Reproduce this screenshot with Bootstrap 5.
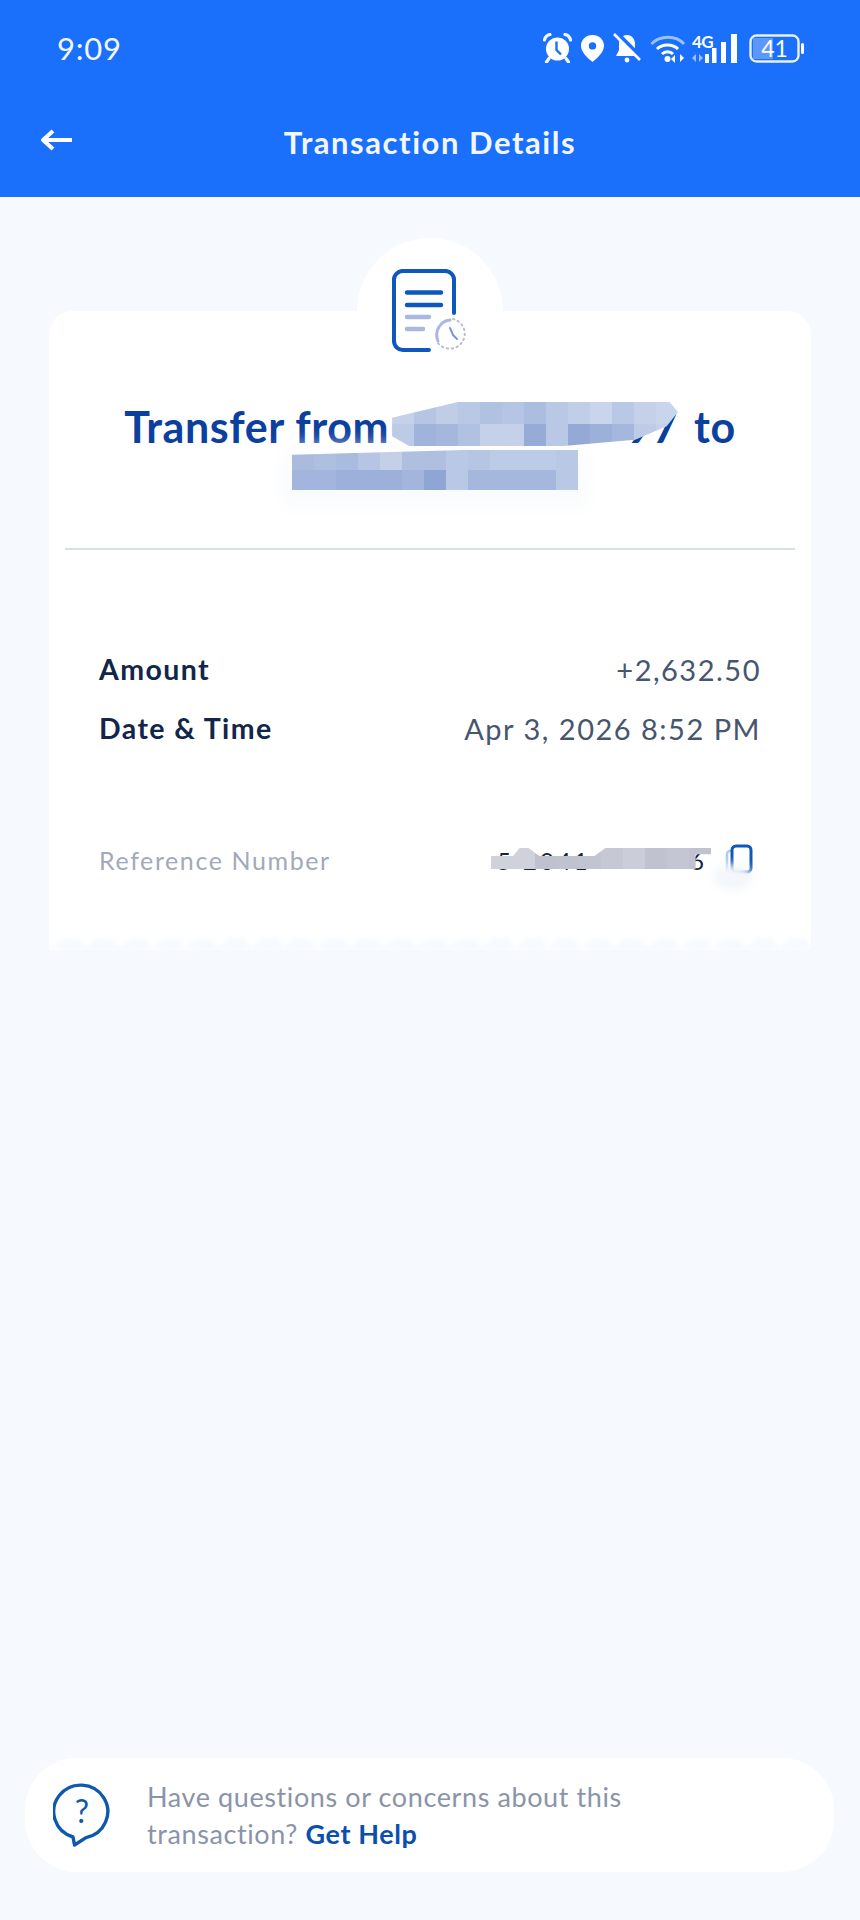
<!DOCTYPE html>
<html lang="en">
<head>
  <meta charset="UTF-8" />
  <meta name="viewport" content="width=device-width, initial-scale=1.0" />
  <title>Transaction Details</title>
  <link href="https://cdn.jsdelivr.net/npm/bootstrap@5.3.0/dist/css/bootstrap.min.css" rel="stylesheet">
  <style>
    body { font-family: Lato, "Open Sans", sans-serif; background: #f6faff; min-height: 1920px; }
    .top-head { background: #1a6ffb; height: 197px; color: #fff; }
    .status-row { height: 96px; padding: 0 56px 0 57px; }
    .clock-text { font-size: 31px; letter-spacing: .8px; color: #f2f7ff; }
    .status-icons { gap: 9px; }
    .net-label { font-size: 17px; font-weight: 700; line-height: 1; position: absolute; left: 0; top: -1px; letter-spacing: -.6px; }
    .net-wrap { width: 46px; height: 29px; margin-left: -4px; }
    .bat-wrap { width: 55px; height: 29px; margin-left: 2px; }
    .bat-text { font-size: 23px; line-height: 29px; width: 51px; text-align: center; }
    .nav-row { height: 94px; padding: 0 40px 2px; }
    .head-title { font-size: 31px; font-weight: 700; letter-spacing: 1.55px; color: #f2f7ff; }
    .receipt { margin: 114px 49px 0; height: 639px; border-radius: 24px 24px 0 0; padding: 93px 16px 0; }
    .receipt::after { content: ""; position: absolute; left: 0; right: 0; bottom: 0; height: 12px; filter: blur(2px);
      background: linear-gradient(135deg, transparent 50%, #f6faff 50%) 0 0 / 16.5px 12px repeat-x,
                  linear-gradient(225deg, transparent 50%, #f6faff 50%) 16.5px 0 / 33px 12px repeat-x; }
    .bump { width: 146px; height: 146px; left: 308px; top: -73px; z-index: 0; }
    .doc-icon { left: 342px; top: -42px; z-index: 1; }
    .title-text { font-size: 43px; font-weight: 700; line-height: 46px; color: #0c3f9e; height: 92px; margin: 0; letter-spacing: .6px; }
    .mosaic { display: inline-grid; vertical-align: top; }
    .redact-one { width: 286px; height: 46px; margin-left: 3px; text-align: right; }
    .mosaic-first { grid-auto-rows: 22px; left: 0; top: -2px; clip-path: polygon(0 36%, 23% 0, 97% 0, 100% 23%, 96% 55%, 85% 86%, 60% 100%, 6% 100%, 0 78%); }
    .mosaic-glow { margin-left: 10px; box-shadow: 0 8px 18px 10px #fafbfd; }
    .mosaic-second { grid-auto-rows: 20px; clip-path: polygon(0 12%, 60% 0, 100% 0, 100% 100%, 0 100%); }
    .rule-line { border-top: 2px solid #d7dfe7; margin: 52px 0 0; opacity: 1; }
    .rows-wrap { padding: 90px 34px 0; }
    .info-row { height: 59px; }
    .info-label { color: #12264a; font-weight: 700; font-size: 28.5px; letter-spacing: 1.4px; }
    .info-value { color: #46566f; font-size: 29px; letter-spacing: 1.5px; }
    .ref-row { margin-top: 88px; height: 30px; }
    .ref-label { color: #a2a9ba; font-size: 25px; letter-spacing: 1.6px; }
    .ref-values { margin-top: -5px; }
    .redact-ref { width: 222px; height: 21px; margin-right: 12px; font-size: 24px; line-height: 26px; color: #1c2433; letter-spacing: 3px; padding: 0 6px; }
    .mosaic-ref { grid-auto-rows: 21px; left: 0; top: 0; clip-path: polygon(0 38%, 10% 38%, 13% 0, 17% 0, 22% 38%, 47% 38%, 52% 0, 100% 0, 100% 30%, 93% 30%, 93% 100%, 0 100%); }
    .ref-smudge { width: 40px; height: 26px; left: 222px; top: 20px; background: #f3f6fa; border-radius: 50%; filter: blur(4px); }
    .help-box { margin: auto 26px 48px 25px; height: 114px; border-radius: 52px; padding-left: 28px; gap: 36px; }
    .help-text { font-size: 27px; line-height: 37px; color: #8a94a9; letter-spacing: .6px; }
    .help-link { color: #0b4fae; font-weight: 700; text-decoration: none; }
  </style>
</head>
<body class="d-flex flex-column">
  <header class="top-head">
    <div class="status-row d-flex justify-content-between align-items-center">
      <span class="clock-text">9:09</span>
      <div class="status-icons d-flex align-items-center">
        <!-- alarm -->
        <svg width="29" height="30" viewBox="0 0 29 30" fill="none">
          <circle cx="14.5" cy="16" r="11.5" fill="#fff"/>
          <path d="M1.5 7 A7 7 0 0 1 7 1.5 M27.5 7 A7 7 0 0 0 22 1.5 M6 25.5 L3.5 29 M23 25.5 L25.5 29" stroke="#f2f7ff" stroke-width="3.2" stroke-linecap="round"/>
          <path d="M13.5 8.5 V17 L18 21.5" stroke="#1a6ffb" stroke-width="2.4"/>
        </svg>
        <!-- pin -->
        <svg width="23" height="27" viewBox="0 0 23 27">
          <path fill="#fff" fill-rule="evenodd" d="M11.5 0 C5 0 0 4.6 0 10.8 C0 17 6 22.5 11.5 27 C17 22.5 23 17 23 10.8 C23 4.6 18 0 11.5 0 Z M11.5 7.2 A3.7 3.7 0 1 1 11.5 14.6 A3.7 3.7 0 1 1 11.5 7.2 Z"/>
        </svg>
        <!-- bell off -->
        <svg width="28" height="30" viewBox="0 0 28 30" fill="none">
          <path fill="#fff" d="M14 2 C19 2 22 6 22 11 V17 L25 23 H3 L6 17 V11 C6 6 9 2 14 2 Z"/>
          <circle cx="14" cy="27" r="2.4" fill="#fff"/>
          <path d="M3 -1 L29 25" stroke="#1a6ffb" stroke-width="4"/>
          <path d="M1 1 L27 27" stroke="#fff" stroke-width="2.6"/>
        </svg>
        <!-- wifi -->
        <svg width="37" height="29" viewBox="0 0 37 29" fill="none">
          <path d="M1.5 10 C10 1 26 1 34 10" stroke="#9cc0fb" stroke-width="3"/>
          <path d="M7 15 C12 9.5 23 9.5 28 15" stroke="#fff" stroke-width="3"/>
          <path d="M12 20 C15 17 20 17 23 20" stroke="#fff" stroke-width="3"/>
          <circle cx="17.5" cy="25" r="3" fill="#fff"/>
          <path d="M25 29 V21 L21 25 Z M30 20 V28 L34 24 Z" fill="#fff"/>
        </svg>
        <!-- 4G + signal -->
        <div class="net-wrap position-relative">
          <span class="net-label">4G</span>
          <svg class="position-absolute top-0 start-0" width="46" height="29" viewBox="0 0 46 29">
            <path d="M4 20 V28 L0 24 Z M7 20 V28 L11 24 Z" fill="#9cc0fb"/>
            <rect x="13" y="20" width="4" height="9" fill="#fff"/>
            <rect x="20" y="14" width="4.5" height="15" fill="#fff"/>
            <rect x="29" y="8" width="5" height="21" fill="#fff"/>
            <rect x="39" y="0" width="6" height="29" fill="#fff"/>
          </svg>
        </div>
        <!-- battery -->
        <div class="bat-wrap position-relative">
          <svg class="position-absolute top-0 start-0" width="55" height="29" viewBox="0 0 55 29" fill="none">
            <rect x="1.5" y="1.5" width="48" height="26" rx="6" stroke="#e8f0ff" stroke-width="2.4"/>
            <path d="M4 4 H24 V25 H4 Z" fill="#5c97fc"/>
            <rect x="52" y="9" width="3" height="11" rx="1.5" fill="#fff"/>
          </svg>
          <div class="bat-text position-relative">41</div>
        </div>
      </div>
    </div>
    <div class="nav-row position-relative d-flex justify-content-center align-items-center">
      <svg class="position-absolute" style="left:40px;top:32px" width="34" height="24" viewBox="0 0 34 24" fill="none">
        <path d="M32 12 H5 M13 3 L3 12 L13 21" stroke="#fff" stroke-width="4" stroke-linejoin="round"/>
      </svg>
      <span class="head-title">Transaction Details</span>
    </div>
  </header>

  <main class="card border-0 receipt position-relative">
    <div class="bump bg-white rounded-circle position-absolute"></div>
    <svg class="doc-icon position-absolute" width="78" height="90" viewBox="0 0 78 90" fill="none">
      <path d="M38 81 H13 A9 9 0 0 1 3 72 V12 A9 9 0 0 1 13 2 H53 A9 9 0 0 1 63 12 V44" stroke="#0e58bd" stroke-width="4" stroke-linecap="round"/>
      <path d="M16 23.5 H50 M16 36 H50" stroke="#0e58bd" stroke-width="4.5" stroke-linecap="round"/>
      <path d="M16 48 H38 M16 60 H32" stroke="#a9b9dd" stroke-width="4.5" stroke-linecap="round"/>
      <path d="M47 72 A15 15 0 0 1 59 51" stroke="#a9b9dd" stroke-width="3" stroke-linecap="round"/>
      <path d="M62 50 A15 15 0 1 1 47 74" stroke="#b6bfd2" stroke-width="2" stroke-dasharray="1.5 3.5" stroke-linecap="round"/>
      <path d="M59 59 L62 66 L66 70" stroke="#7c97cf" stroke-width="2" stroke-linecap="round"/>
    </svg>

    <h1 class="title-text position-relative">
      <span class="d-flex justify-content-center align-items-start">
        <span>Transfer from</span>
        <span class="redact-one position-relative">97
          <span class="mosaic mosaic-first position-absolute" data-cols="13" data-pal="c4d1e9,b5c5e3,bfcde7,b9c8e5,b0c1e2,b5c5e3,acbedf,b9c8e5,c0cee8,c9d5ec,b9c8e5,c4d1e9,c9d5ec,bdcbe6,a0b3db,a5b7dd,b0c1e2,c4d1e9,c4d1e9,97abd7,b9c8e5,95a9d6,9db0da,a5b7dd,bdcbe6,c4d1e9"></span>
        </span>
        <span class="ms-3">to</span>
      </span>
      <span class="d-flex justify-content-center">
        <span class="mosaic-glow d-inline-flex">
          <span class="mosaic mosaic-second" data-cols="13" data-pal="aabbde,aebfe0,a9bbde,b5c5e3,c3d0e8,aebfe0,aebfe0,b9c8e5,b5c5e3,bccbe6,bccbe6,bccbe6,b9c8e5,a3b5dc,a3b5dc,9db0da,9db0da,9db0da,a3b5dc,8fa6d4,b9c8e5,a5b7dd,a5b7dd,a5b7dd,a5b7dd,b9c8e5"></span>
        </span>
      </span>
    </h1>
    <hr class="rule-line">

    <div class="rows-wrap">
      <div class="info-row d-flex justify-content-between align-items-center">
        <span class="info-label">Amount</span><span class="info-value">+2,632.50</span>
      </div>
      <div class="info-row d-flex justify-content-between align-items-center">
        <span class="info-label">Date &amp; Time</span><span class="info-value">Apr 3, 2026 8:52 PM</span>
      </div>
      <div class="ref-row d-flex justify-content-between align-items-center">
        <span class="ref-label">Reference Number</span>
        <div class="ref-values d-flex align-items-center position-relative">
          <span class="redact-ref position-relative d-flex justify-content-between">
            <span>5&nbsp;2041</span><span>6</span>
            <span class="mosaic mosaic-ref position-absolute" data-cols="10" data-pal="cfd1db,cfd1db,bfc2ce,c0c3cf,c2c5d1,c6c8d4,cbcdd8,c0c3cf,c4c7d3,c0c3cf"></span>
          </span>
          <svg class="me-2" width="28" height="30" viewBox="0 0 28 30" fill="none">
            <rect x="2" y="7" width="14" height="21" rx="3" stroke="#a9cdf5" stroke-width="2.5"/>
            <rect x="7" y="2" width="19" height="26" rx="4" fill="#fff" stroke="#0e58bd" stroke-width="3"/>
          </svg>
          <span class="ref-smudge position-absolute"></span>
        </div>
      </div>
    </div>
  </main>

  <div class="help-box bg-white d-flex align-items-center">
    <svg width="58" height="64" viewBox="0 0 58 64" fill="none">
      <path d="M20 54 A27 26.5 0 1 1 33 54.6 L21.5 62 Z" stroke="#0e58ad" stroke-width="3.4" stroke-linejoin="round"/>
      <text x="29" y="40" text-anchor="middle" font-family="Lato, sans-serif" font-size="32" fill="#0e58ad">?</text>
    </svg>
    <div class="help-text">Have questions or concerns about this<br>transaction? <a href="#" class="help-link">Get Help</a></div>
  </div>

  <script src="https://cdn.jsdelivr.net/npm/bootstrap@5.3.0/dist/js/bootstrap.bundle.min.js"></script>
  <script>
    // pixelated redaction blocks
    document.querySelectorAll(".mosaic").forEach(el => {
      el.style.gridTemplateColumns = `repeat(${el.dataset.cols}, 22px)`;
      el.dataset.pal.split(",").forEach(c => {
        const cell = document.createElement("span");
        cell.style.background = "#" + c;
        el.appendChild(cell);
      });
    });
  </script>
</body>
</html>
